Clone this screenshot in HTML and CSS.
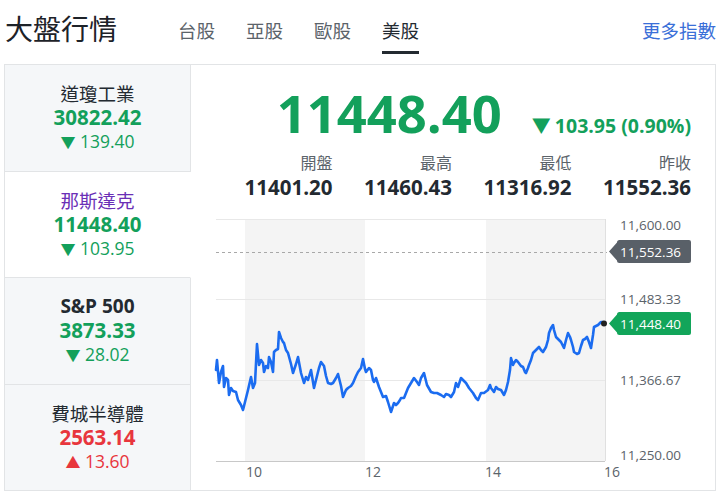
FILE: index.html
```html
<!DOCTYPE html>
<html lang="zh-Hant">
<head>
<meta charset="utf-8">
<title>大盤行情</title>
<link rel="stylesheet" href="styles.css">
</head>
<body>
<header class="top">
  <h1 class="title">大盤行情</h1>
  <nav class="tabs">
    <a class="tab">台股</a>
    <a class="tab">亞股</a>
    <a class="tab">歐股</a>
    <a class="tab active">美股</a>
  </nav>
  <a class="more">更多指數</a>
</header>
<div class="board">
  <aside class="side">
    <div class="idx">
      <div class="name">道瓊工業</div>
      <div class="val down">30822.42</div>
      <div class="chg down"><span class="tri">▼</span> 139.40</div>
    </div>
    <div class="idx active">
      <div class="name purple">那斯達克</div>
      <div class="val down">11448.40</div>
      <div class="chg down"><span class="tri">▼</span> 103.95</div>
    </div>
    <div class="idx">
      <div class="name bold">S&amp;P 500</div>
      <div class="val down">3873.33</div>
      <div class="chg down"><span class="tri">▼</span> 28.02</div>
    </div>
    <div class="idx">
      <div class="name">費城半導體</div>
      <div class="val up">2563.14</div>
      <div class="chg up"><span class="tri">▲</span> 13.60</div>
    </div>
  </aside>
  <section class="main">
    <div class="quote">
      <span class="big">11448.40</span>
      <span class="change"><span class="tri">▼</span>103.95 (0.90%)</span>
    </div>
    <div class="stats">
      <div class="stat"><div class="lbl">開盤</div><div class="num">11401.20</div></div>
      <div class="stat"><div class="lbl">最高</div><div class="num">11460.43</div></div>
      <div class="stat"><div class="lbl">最低</div><div class="num">11316.92</div></div>
      <div class="stat"><div class="lbl">昨收</div><div class="num">11552.36</div></div>
    </div>
    <svg class="chart" width="526" height="285" viewBox="190 205 526 285" xmlns="http://www.w3.org/2000/svg">
      <rect x="244" y="219" width="120" height="242" fill="#f4f4f4"/>
      <rect x="485" y="219" width="119" height="242" fill="#f4f4f4"/>
      <line x1="215" y1="219.5" x2="604" y2="219.5" stroke="#e8e8e8" stroke-width="1"/>
      <line x1="215" y1="299.5" x2="604" y2="299.5" stroke="#e8e8e8" stroke-width="1"/>
      <line x1="215" y1="380.5" x2="604" y2="380.5" stroke="#e8e8e8" stroke-width="1"/>
      <line x1="215" y1="461.5" x2="604" y2="461.5" stroke="#c8c8c8" stroke-width="1"/>
      <line x1="604.5" y1="219" x2="604.5" y2="461" stroke="#e0e0e0" stroke-width="1"/>
      <line x1="215" y1="252.5" x2="606" y2="252.5" stroke="#a8a8a8" stroke-width="1" stroke-dasharray="3 3"/>
      <path fill="none" stroke="#1b6cf0" stroke-width="2.6" stroke-linejoin="round" stroke-linecap="round" d="M215,370 L216,360 218,383 220,372 222,366 223,387 225,378 227,380 228,395 230,388 232,391 235,392 237,400 240,405 242,410 245,398 247,390 250,377 252,388 254,383 256,344 258,365 260,360 262,363 263,372 265,366 267,368 268,357 270,362 272,372 273,352 275,350 277,349 278,332 280,338 282,342 283,343 285,350 287,353 290,364 292,373 295,364 297,357 300,373 303,383 305,377 307,380 310,370 313,388 315,380 318,368 320,362 323,366 325,376 327,383 330,384 332,383 335,378 337,374 340,386 342,397 345,390 347,388 350,386 352,383 355,376 357,372 360,368 362,359 364,369 365,372 368,368 370,370 372,380 373,382 375,378 378,387 380,392 382,397 385,396 387,402 390,412 392,406 393,403 395,405 397,403 399,400 400,398 403,398 405,393 407,388 410,383 413,378 416,382 418,385 420,378 423,373 426,385 430,392 433,393 436,393 440,395 443,397 445,394 448,395 450,397 453,392 455,383 457,387 460,378 462,380 465,383 468,388 472,393 475,398 477,400 480,393 483,393 487,390 489,385 490,388 493,392 495,387 497,389 500,390 503,395 505,390 507,382 509,370 510,358 512,365 513,363 515,360 517,362 520,366 522,367 524,372 525,373 527,368 528,365 530,360 532,353 534,351 535,350 537,348 538,347 540,350 542,352 545,347 547,340 548,333 550,328 552,325 553,330 555,337 558,340 560,342 562,346 563,348 565,340 567,333 569,337 570,340 572,347 573,352 576,354 578,353 580,346 582,340 584,339 586,337 588,342 590,348 592,335 593,327 595,326 597,325 599,323 600,322 602,322 603,323"/>
      <circle cx="603" cy="323.5" r="3" fill="#222"/>
      <g class="ylab">
        <text x="619" y="230">11,600.00</text>
        <text x="619" y="304">11,483.33</text>
        <text x="619" y="385">11,366.67</text>
        <text x="619" y="460">11,250.00</text>
      </g>
      <path d="M608,251.5 L616,242.5 Q616,240 618.5,240 L688,240 Q690,240 690,242 L690,261 Q690,263 688,263 L618.5,263 Q616,263 616,260.5 Z" fill="#596068"/>
      <text class="badge" x="619" y="256.5">11,552.36</text>
      <path d="M608,323.5 L616,314.5 Q616,312 618.5,312 L688,312 Q690,312 690,314 L690,333 Q690,335 688,335 L618.5,335 Q616,335 616,332.5 Z" fill="#12a55a"/>
      <text class="badge" x="619" y="328.5">11,448.40</text>
      <g class="xlab">
        <text x="245" y="477">10</text>
        <text x="364" y="477">12</text>
        <text x="484" y="477">14</text>
        <text x="603" y="477">16</text>
      </g>
    </svg>
  </section>
</div>
</body>
</html>
```
FILE: styles.css
```css
* { box-sizing: border-box; }
html, body {
  margin: 0;
  padding: 0;
  background: #fff;
  font-family: "Open Sans", "Noto Sans CJK TC", sans-serif;
  color: #232a31;
}
body { width: 720px; height: 495px; overflow: hidden; }

.top {
  display: flex;
  align-items: flex-start;
  height: 64px;
  padding: 0 4px 0 5px;
}
.title {
  margin: 14px 0 0 0;
  font-family: "Noto Sans CJK TC", sans-serif;
  font-size: 28px;
  line-height: 28px;
  font-weight: 400;
  color: #1d2228;
}
.tabs {
  display: flex;
  gap: 31px;
  margin-left: 61px;
}
.tab {
  display: block;
  padding-top: 21px;
  padding-bottom: 12px;
  border-bottom: 3px solid transparent;
  font-family: "Noto Sans CJK TC", sans-serif;
  font-size: 18.5px;
  line-height: 18px;
  color: #5b636a;
}
.tab.active {
  color: #232a31;
  border-bottom-color: #232a31;
}
.more {
  margin-left: auto;
  padding-top: 21px;
  font-family: "Noto Sans CJK TC", sans-serif;
  font-size: 18.5px;
  line-height: 18px;
  color: #3a6fd8;
}

.board {
  display: flex;
  margin-left: 4px;
  width: 712px;
  height: 427px;
  border: 1px solid #e2e4e6;
}
.side {
  display: flex;
  flex-direction: column;
  width: 186px;
  flex: none;
}
.idx {
  flex: 1;
  display: flex;
  flex-direction: column;
  justify-content: center;
  align-items: center;
  background: #f5f7f9;
  border-right: 1px solid #e2e4e6;
  border-bottom: 1px solid #e2e4e6;
  line-height: 24px;
}
.idx:last-child { border-bottom: none; }
.idx.active {
  background: #fff;
  border-right-color: #fff;
}
.name {
  font-family: "Noto Sans CJK TC", sans-serif;
  font-size: 18.5px;
  color: #232a31;
}
.name.bold {
  font-family: "Open Sans", sans-serif;
  font-weight: 700;
  font-size: 19px;
}
.name.purple { color: #6a2fb6; }
.val {
  font-weight: 700;
  font-size: 20.5px;
}
.chg {
  font-size: 17.5px;
}
.chg .tri { font-size: 15px; }
.down { color: #13a05b; }
.up { color: #e8363d; }

.main {
  flex: 1;
  display: flex;
  flex-direction: column;
}
.quote {
  display: flex;
  align-items: baseline;
  justify-content: flex-end;
  gap: 30px;
  padding-right: 26px;
  height: 82px;
  padding-top: 18px;
}
.big {
  font-weight: 700;
  font-size: 52.5px;
  line-height: 60px;
  color: #13a05b;
}
.change {
  font-weight: 700;
  font-size: 19.5px;
  color: #13a05b;
}
.change .tri { font-size: 19px; margin-right: 4px; }
.stats {
  display: grid;
  grid-template-columns: repeat(4, 119.5px);
  justify-content: end;
  padding-right: 26px;
  padding-top: 3px;
  height: 58px;
}
.stat { text-align: right; }
.lbl {
  font-family: "Noto Sans CJK TC", sans-serif;
  font-size: 16px;
  line-height: 24px;
  color: #5b636a;
}
.num {
  font-weight: 700;
  font-size: 20.5px;
  line-height: 27px;
  color: #232a31;
}
.chart {
  display: block;
  margin-top: auto;
}
.ylab text {
  font-family: "Open Sans", sans-serif;
  font-size: 13.5px;
  fill: #5b636a;
}
.xlab text {
  font-family: "Open Sans", sans-serif;
  font-size: 14px;
  fill: #5b636a;
}
.badge {
  font-family: "Open Sans", sans-serif;
  font-size: 13.5px;
  fill: #fff;
}
```
